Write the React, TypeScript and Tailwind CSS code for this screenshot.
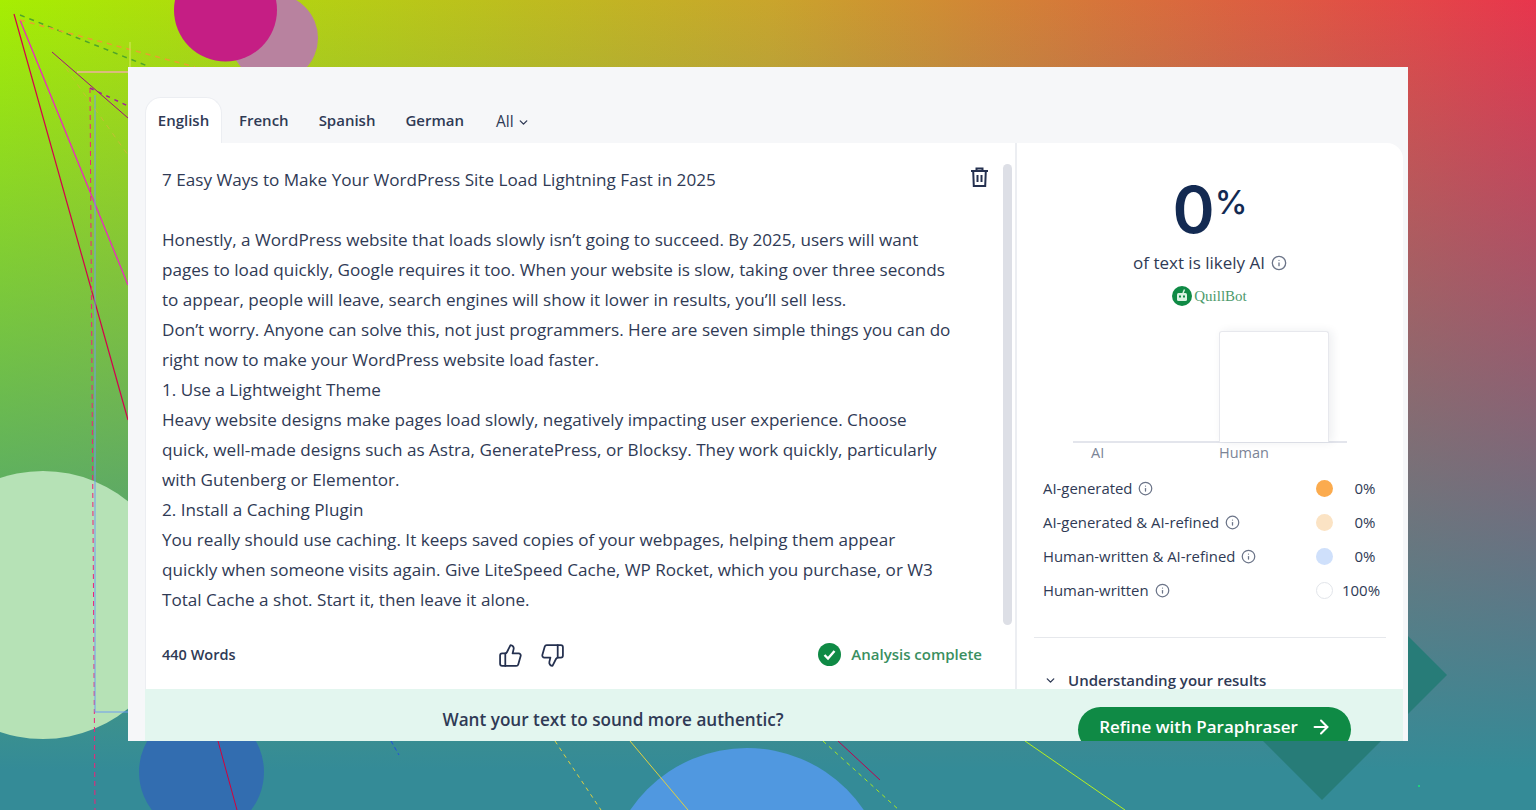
import { ArrowRight, ChevronDown, Info, ThumbsDown, ThumbsUp } from "lucide-react";

const lines = [
  "Honestly, a WordPress website that loads slowly isn’t going to succeed. By 2025, users will want",
  "pages to load quickly, Google requires it too. When your website is slow, taking over three seconds",
  "to appear, people will leave, search engines will show it lower in results, you’ll sell less.",
  "Don’t worry. Anyone can solve this, not just programmers. Here are seven simple things you can do",
  "right now to make your WordPress website load faster.",
  "1. Use a Lightweight Theme",
  "Heavy website designs make pages load slowly, negatively impacting user experience. Choose",
  "quick, well-made designs such as Astra, GeneratePress, or Blocksy. They work quickly, particularly",
  "with Gutenberg or Elementor.",
  "2. Install a Caching Plugin",
  "You really should use caching. It keeps saved copies of your webpages, helping them appear",
  "quickly when someone visits again. Give LiteSpeed Cache, WP Rocket, which you purchase, or W3",
  "Total Cache a shot. Start it, then leave it alone.",
];

const legend = [
  { label: "AI-generated", dot: "bg-[#fbab4e]", value: "0%", valueClass: "pl-[8px]" },
  { label: "AI-generated & AI-refined", dot: "bg-[#fbe3c4]", value: "0%", valueClass: "pl-[8px]" },
  { label: "Human-written & AI-refined", dot: "bg-[#cfe0fb]", value: "0%", valueClass: "pl-[8px]" },
  { label: "Human-written", dot: "bg-white border border-[#e2e5ea]", value: "100%", valueClass: "" },
];

// decorative backdrop behind the card
function Backdrop() {
  return (
    <svg className="absolute inset-0" width="1536" height="810" viewBox="0 0 1536 810">
      <defs>
        <linearGradient id="top" x1="0" y1="0" x2="1" y2="0">
          <stop offset="0" stopColor="#a6ee02" />
          <stop offset="0.5" stopColor="#c9a52c" />
          <stop offset="1" stopColor="#e8354d" />
        </linearGradient>
        <linearGradient id="fade" x1="0" y1="0" x2="0" y2="1">
          <stop offset="0" stopColor="#348b97" stopOpacity="0" />
          <stop offset="0.95" stopColor="#348b97" stopOpacity="1" />
          <stop offset="1" stopColor="#348b97" stopOpacity="1" />
        </linearGradient>
      </defs>
      <rect width="1536" height="810" fill="url(#top)" />
      <rect width="1536" height="810" fill="url(#fade)" />
      <circle cx="274" cy="38" r="44" fill="#b8829f" />
      <circle cx="225.5" cy="10" r="51.5" fill="#c51e84" />
      <circle cx="43" cy="605" r="134" fill="#b6e2b6" />
      <circle cx="201.5" cy="772" r="62.5" fill="#326db0" />
      <circle cx="747" cy="889" r="141" fill="#5098e0" />
      <polygon points="1322,550 1447,675 1322,800 1197,675" fill="#277c78" />
      <g fill="none">
        <path d="M14 14L128 420" stroke="#d4004c" strokeWidth="1.2" />
        <path d="M20 20L128 285" stroke="#f01fc8" strokeWidth="1.2" />
        <path d="M20 15L150 67" stroke="#4fa52a" strokeWidth="1.5" strokeDasharray="5 5" />
        <path d="M20 20L195 67" stroke="#e8a030" strokeWidth="1.5" strokeDasharray="5 5" />
        <path d="M52 52L128 118" stroke="#a0107a" />
        <path d="M77 72H128" stroke="#eeb0a0" strokeWidth="1.5" />
        <path d="M90 88L95 810" stroke="#f0207a" strokeDasharray="5 4" />
        <path d="M90 88L128 106" stroke="#a0209a" strokeDasharray="4 5" strokeWidth="1.5" />
        <path d="M95 95V712H128" stroke="#6f9cf0" />
        <path d="M60 60L128 155" stroke="#e0b040" strokeDasharray="5 5" strokeOpacity="0.6" />
        <path d="M130 42V67" stroke="#d8e860" />
        <path d="M218 741L237 810" stroke="#d4003c" />
        <path d="M391 741L399 755" stroke="#2050e0" strokeDasharray="4 3" />
        <path d="M555 741L601 810" stroke="#e0d040" strokeDasharray="4 4" />
        <path d="M630 741L688 810" stroke="#e0d040" />
        <path d="M823 741L899 810" stroke="#a8e820" strokeDasharray="4 4" />
        <path d="M838 741L880 780" stroke="#c00050" />
        <path d="M1025 741L1125 810" stroke="#b8f020" />
      </g>
      <rect x="1418" y="785" width="2" height="2" fill="#20d080" />
    </svg>
  );
}

export default function App() {
  return (
    <div className="relative w-[1536px] h-[810px] overflow-hidden font-['Open_Sans',sans-serif] text-[#2f3a55]">
      <Backdrop />

      <div className="relative ml-[128px] mt-[67px] w-[1280px] h-[674px] overflow-hidden bg-[#f6f7f9] pl-[17px] pr-[5px] pt-[30px]">
        {/* Language tabs */}
        <div className="flex h-[46px] items-stretch text-[15px] font-semibold">
          <div className="flex w-[77px] items-center justify-center rounded-t-[16px] border-x border-t border-[#eceef2] bg-white">
            English
          </div>
          <div className="ml-[17px] flex items-center">French</div>
          <div className="ml-[30px] flex items-center">Spanish</div>
          <div className="ml-[30px] flex items-center">German</div>
          <div className="ml-[32px] flex items-center gap-[3px] pt-[4px] text-[15.5px] font-normal">
            All
            <ChevronDown size={13} strokeWidth={2.5} />
          </div>
        </div>

        <div className="flex h-[546px] overflow-hidden rounded-tr-[16px] border-l border-[#eceef2] bg-white">
          {/* Text editor */}
          <div className="flex w-[871px] flex-col border-r-2 border-[#eceef2] pl-[16px]">
            <div className="flex h-[482px]">
              <div className="w-[802px] pt-[22px] text-[17.13px] leading-[30px] whitespace-nowrap">
                <div className="mb-[30px]">7 Easy Ways to Make Your WordPress Site Load Lightning Fast in 2025</div>
                {lines.map((line) => (
                  <div key={line}>{line}</div>
                ))}
              </div>
              <div className="flex w-[30px] flex-col items-center pt-[24px]">
                <svg width="17" height="20" viewBox="0 0 17 20" fill="none" stroke="#24304f" strokeWidth="2">
                  <path d="M0 4H17M5.5 4V1.5H11.5V4M2.2 4L2.8 19H14.2L14.8 4" />
                  <path d="M6.5 8V15M10.5 8V15" />
                </svg>
              </div>
              <div className="ml-[9px] mt-[21px] h-[461px] w-[9px] rounded-full bg-[#dddfe6]" />
            </div>
            <div className="flex h-[60px] items-center pr-[33px]">
              <div className="w-[336px] text-[14.5px] font-semibold">440 Words</div>
              <ThumbsUp size={25} strokeWidth={1.7} className="text-[#24304f]" />
              <ThumbsDown size={25} strokeWidth={1.7} className="ml-[17px] text-[#24304f]" />
              <div className="ml-auto flex items-center gap-[10px] pb-[1px] text-[15px] font-semibold text-[#3a8f5f]">
                <svg width="23" height="23" viewBox="0 0 23 23">
                  <circle cx="11.5" cy="11.5" r="11.5" fill="#0f8a45" />
                  <path d="M6.5 12L10 15.5L16.5 8" fill="none" stroke="#fff" strokeWidth="2.4" />
                </svg>
                Analysis complete
              </div>
            </div>
          </div>

          {/* Detection result */}
          <div className="flex flex-1 flex-col pl-[17px] pr-[17px]">
            <div className="mt-[31px] flex h-[72px] justify-center font-['Inter',sans-serif] text-[#132a52]">
              <span className="text-[64px] leading-[72px] font-semibold">0</span>
              <span className="mt-[8px] text-[33px] leading-[40px] font-medium">%</span>
            </div>
            <div className="mt-[5px] flex items-center justify-center gap-[6px] text-[17px] leading-[24px]">
              of text is likely AI
              <Info size={16} className="text-[#6b7488]" />
            </div>
            <div className="mt-[11px] flex items-center justify-center gap-[2px] pr-[1px]">
              <svg width="20" height="20" viewBox="0 0 20 20">
                <circle cx="10" cy="10" r="10" fill="#0f8a45" />
                <rect x="5" y="7" width="10" height="8" rx="1.5" fill="#d9f2e2" />
                <path d="M11 7L12.5 3.5" stroke="#d9f2e2" strokeWidth="1.5" />
                <rect x="7" y="9.5" width="2" height="2" fill="#0f8a45" />
                <rect x="11" y="9.5" width="2" height="2" fill="#0f8a45" />
              </svg>
              <span className="font-['Liberation_Serif',serif] text-[15px] leading-[20px] text-[#4d9a6c]">QuillBot</span>
            </div>

            {/* Bar chart */}
            <div className="relative ml-[39px] mt-[25px] flex h-[112px] w-[274px] border-b-2 border-[#e3e5ec]">
              <div className="ml-[146px] h-[111px] w-[110px] rounded-t-[3px] border border-b-0 border-[#e7e8ed] bg-white shadow-[3px_0_10px_rgba(30,40,70,0.08)]" />
            </div>
            <div className="ml-[39px] flex h-[20px] w-[274px] items-center text-[14.5px] text-[#7b8496]">
              <span className="ml-[18px] w-[128px]">AI</span>
              <span>Human</span>
            </div>

            {/* Legend */}
            <div className="mt-[8px] flex flex-col pl-[9px]">
              {legend.map((row) => (
                <div key={row.label} className="flex h-[34px] items-center text-[14.9px]">
                  <span>{row.label}</span>
                  <Info size={15} className="ml-[6px] text-[#6b7488]" />
                  <div className="ml-auto flex items-center">
                    <span className={`h-[17px] w-[17px] rounded-full ${row.dot}`} />
                    <span className={`ml-[3px] w-[50px] text-center text-[15px] ${row.valueClass}`}>{row.value}</span>
                  </div>
                </div>
              ))}
            </div>

            <div className="mt-[30px] border-t border-[#e6e8ec]" />
            <div className="mt-[32px] flex items-center gap-[11px] pl-[10px] text-[15px] leading-[20px] font-semibold">
              <ChevronDown size={13} strokeWidth={2.5} />
              Understanding your results
            </div>
          </div>
        </div>

        {/* Paraphraser upsell */}
        <div className="flex h-[70px] bg-[#e3f6ef]">
          <div className="w-[933px] pl-[3px] pt-[17px] text-center text-[17.15px] leading-[28px] font-semibold">
            Want your text to sound more authentic?
          </div>
          <div className="mt-[18px] flex h-[45px] w-[273px] items-center justify-center gap-[12px] rounded-full bg-[#0f8a45] pb-[6px] pl-[2px] text-[17px] font-semibold text-white">
            Refine with Paraphraser
            <ArrowRight size={22} strokeWidth={2.2} />
          </div>
        </div>
      </div>
    </div>
  );
}
